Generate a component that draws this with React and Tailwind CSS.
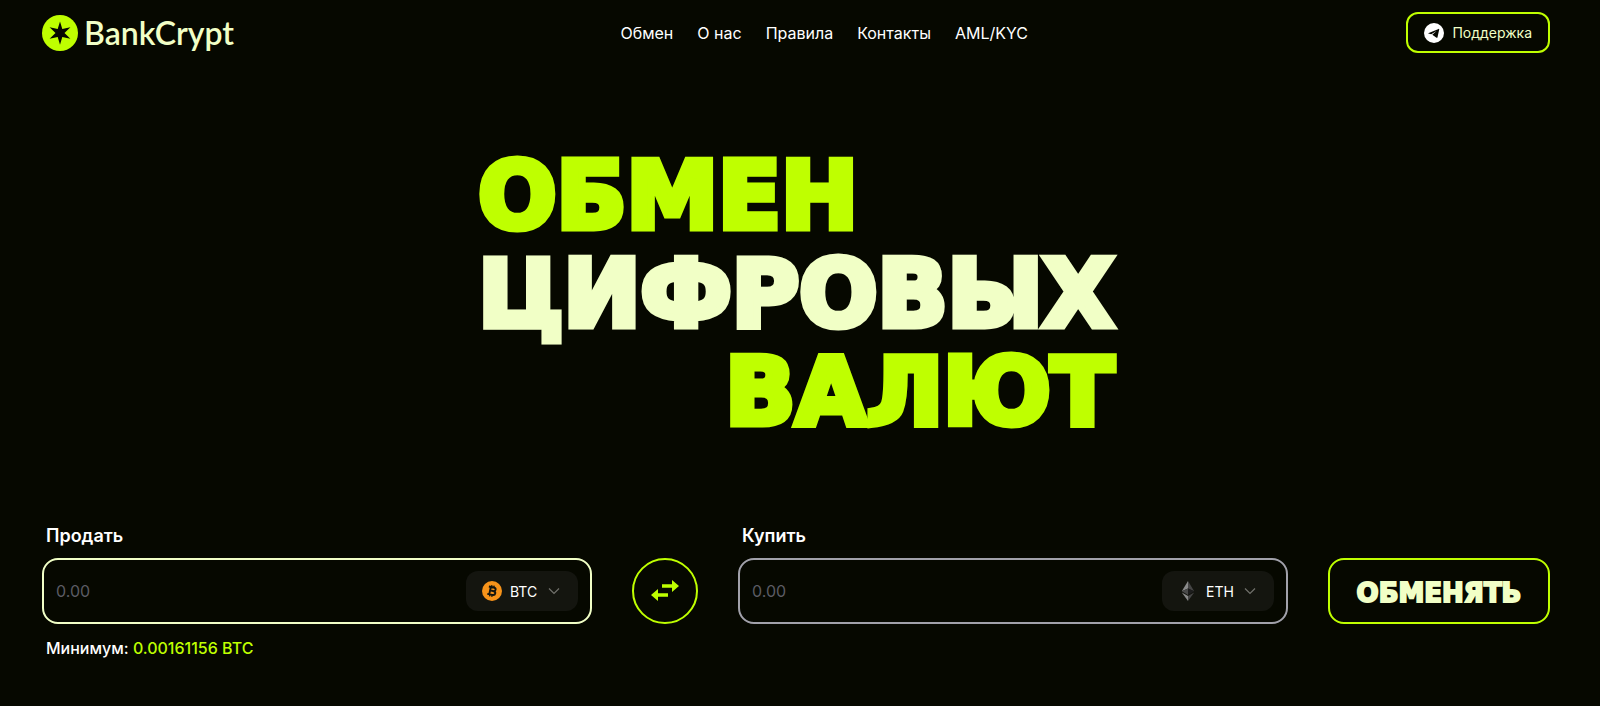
import { useState } from "react";

const links = ["Обмен", "О нас", "Правила", "Контакты", "AML/KYC"];

function LogoMark() {
  return (
    <svg viewBox="0 0 36 36" className="size-9 shrink-0" aria-hidden="true">
      <circle cx="18" cy="18" r="18" fill="#bfff00" />
      <path
        d="M18 6.5 L20.3 14.1 L28.4 12.2 L22.5 18 L28.4 23.8 L20.3 21.9 L18 29.8 L15.7 21.9 L7.6 23.8 L13.5 18 L7.6 12.2 L15.7 14.1 Z"
        fill="#060800"
      />
    </svg>
  );
}

function TelegramIcon() {
  return (
    <svg viewBox="0 0 20 20" className="size-5 shrink-0" aria-hidden="true">
      <circle cx="10" cy="10" r="10" fill="#fff" />
      <path
        d="M4.2 10.2 L14.6 5.9 C15 5.7 15.3 6 15.2 6.5 L13.5 14.3 C13.4 14.9 13 15 12.5 14.7 L8.3 11.8 L12.6 7.9 L7.2 11.3 L4.3 10.6 Z"
        fill="#060800"
      />
    </svg>
  );
}

function BtcIcon() {
  return (
    <svg viewBox="0 0 20 20" className="size-5 shrink-0" aria-hidden="true">
      <circle cx="10" cy="10" r="10" fill="#f7931a" />
      <g
        transform="rotate(12 10 10)"
        fill="none"
        stroke="#14150f"
        strokeWidth="1.9"
      >
        <path d="M6 6.2 H11 C14 6.2 14 9.8 11 9.8 H8 M11 9.8 C14.6 9.8 14.6 13.8 11 13.8 H6 M8 6.2 V13.8" />
        <path d="M8.7 4.2 V6.2 M11 4.2 V6.2 M8.7 13.8 V15.8 M11 13.8 V15.8" strokeWidth="1.3" />
      </g>
    </svg>
  );
}

function EthIcon() {
  return (
    <svg viewBox="0 0 20 20" className="size-5 shrink-0" aria-hidden="true">
      <path d="M10 0 L3.8 10.2 L10 7.5 Z" fill="#8a8a8a" />
      <path d="M10 0 L16.2 10.2 L10 7.5 Z" fill="#454545" />
      <path d="M3.8 10.2 L10 7.5 V13.9 Z" fill="#4a4a4a" />
      <path d="M16.2 10.2 L10 7.5 V13.9 Z" fill="#1d1d1d" />
      <path d="M3.8 11.4 L10 15.1 V20 Z" fill="#8a8a8a" />
      <path d="M16.2 11.4 L10 15.1 V20 Z" fill="#454545" />
    </svg>
  );
}

function AmountField({ id, label, value, onChange, coin, icon, border, children }) {
  return (
    <div className="min-w-0 flex-1">
      <label htmlFor={id} className="block px-1 text-[18px] leading-6 font-semibold text-white">
        {label}
      </label>
      <div className={`mt-2.5 flex h-[66px] items-center rounded-2xl border-2 px-3 ${border}`}>
        <input
          id={id}
          type="text"
          inputMode="decimal"
          placeholder="0.00"
          value={value}
          onChange={(e) => onChange(e.target.value)}
          className="h-full min-w-0 flex-1 bg-transparent text-[16px] text-white outline-none placeholder:text-[#5b5b63]"
        />
        <div className="flex h-10 w-28 items-center gap-2 rounded-xl bg-[#14150f] pr-[18px] pl-4">
          {icon}
          <select
            aria-label={`${label}: валюта`}
            defaultValue={coin}
            className="min-w-0 flex-1 appearance-none bg-transparent text-[14px] text-white outline-none"
          >
            <option>{coin}</option>
          </select>
          <svg viewBox="0 0 12 12" className="size-3 shrink-0" aria-hidden="true">
            <path d="M1 3.5 L6 8.5 L11 3.5" fill="none" stroke="#71716c" strokeWidth="1.2" />
          </svg>
        </div>
      </div>
      {children}
    </div>
  );
}

export default function App() {
  const [sell, setSell] = useState("");
  const [buy, setBuy] = useState("");

  const swap = () => {
    setSell(buy);
    setBuy(sell);
  };

  return (
    <div className="min-h-screen bg-[#060800] pr-[50px] pl-[42px] font-['Inter',sans-serif] text-white">
      <header className="flex items-center justify-between pt-3">
        <a href="#" className="flex items-center gap-1.5 text-[#f1ffc6]">
          <LogoMark />
          <span className="font-['Lato',sans-serif] text-[32px] leading-9 font-semibold">BankCrypt</span>
        </a>
        <nav className="flex gap-6 pl-2">
          {links.map((link) => (
            <a key={link} href="#" className="text-[16px] leading-6 hover:text-[#bfff00]">
              {link}
            </a>
          ))}
        </nav>
        <button
          type="button"
          className="flex h-[41px] items-center gap-2 rounded-xl border-2 border-[#bfff00] px-4 text-[14px] text-[#f1ffc6]"
        >
          <TelegramIcon />
          Поддержка
        </button>
      </header>

      <main>
        <h1 className="mx-auto mt-[95px] flex w-fit flex-col font-['DejaVu_Sans',sans-serif] text-[92px] leading-[98px] font-bold text-[#bfff00] [-webkit-text-stroke:7px_currentColor]">
          <span>ОБМЕН</span>
          <span className="text-[#f1ffc6]">ЦИФРОВЫХ</span>
          <span className="text-right">ВАЛЮТ</span>
        </h1>

        <form
          onSubmit={(e) => e.preventDefault()}
          className="mt-[82px] flex items-start gap-10 pb-12"
        >
          <AmountField
            id="sell"
            label="Продать"
            value={sell}
            onChange={setSell}
            coin="BTC"
            icon={<BtcIcon />}
            border="border-[#f1ffc6]"
          >
            <p className="mt-3 px-1 text-[16px] leading-6 font-medium">
              Минимум: <span className="text-[#bfff00]">0.00161156 BTC</span>
            </p>
          </AmountField>
          <button
            type="button"
            aria-label="Поменять местами"
            onClick={swap}
            className="mt-[34px] flex size-[66px] shrink-0 items-center justify-center rounded-full border-2 border-[#bfff00]"
          >
            <svg viewBox="0 0 28 22" className="h-[22px] w-7" fill="#bfff00" aria-hidden="true">
              <path d="M11 4.3 H21 V0 L28 6 L21 12 V7.7 H11 Z" />
              <path d="M17 13.3 H7 V9 L0 15 L7 21 V16.7 H17 Z" />
            </svg>
          </button>
          <AmountField
            id="buy"
            label="Купить"
            value={buy}
            onChange={setBuy}
            coin="ETH"
            icon={<EthIcon />}
            border="border-[#a1a1aa]"
          />
          <button
            type="submit"
            className="mt-[34px] h-[66px] w-[222px] shrink-0 rounded-2xl border-2 border-[#bfff00] pt-1 font-['DejaVu_Sans',sans-serif] text-[26px] font-bold text-[#f1ffc6] [-webkit-text-stroke:2px_currentColor]"
          >
            ОБМЕНЯТЬ
          </button>
        </form>
      </main>
    </div>
  );
}
